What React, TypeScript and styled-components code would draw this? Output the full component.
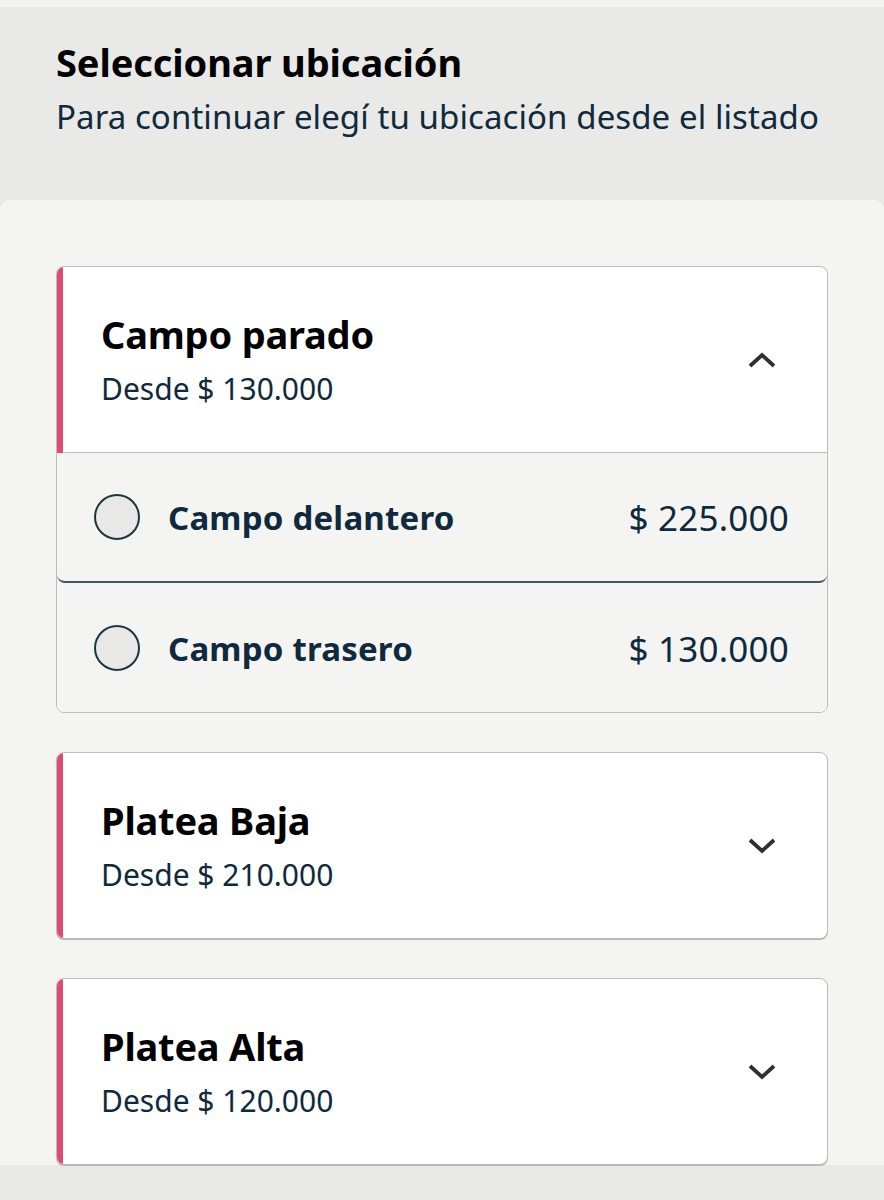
import React from "react";
import styled, { createGlobalStyle } from "styled-components";

const Global = createGlobalStyle`
  html, body { margin: 0; padding: 0; }
  body {
    background: #e9e9e7;
    font-family: "Noto Sans", "Open Sans", sans-serif;
    -webkit-font-smoothing: antialiased;
  }
  * { box-sizing: border-box; }
`;

const Page = styled.div`
  width: 884px;
  min-height: 1200px;
  display: flex;
  flex-direction: column;
  background: #e9e9e7;
`;

const TopStrip = styled.div`
  height: 7px;
  background: #f3f3f1;
`;

const Header = styled.header`
  height: 193px;
  padding: 33px 56px 0;
  display: flex;
  flex-direction: column;
  gap: 13px;
`;

const Title = styled.h1`
  margin: 0;
  font-size: 38px;
  line-height: 44px;
  font-weight: 700;
  color: #000;
  letter-spacing: -0.1px;
`;

const Subtitle = styled.p`
  margin: 0;
  font-size: 33px;
  line-height: 40px;
  font-weight: 400;
  color: #0f2a3c;
  letter-spacing: 0.08px;
`;

const Panel = styled.main`
  background: #f4f4f2;
  border-radius: 10px 10px 0 0;
  padding: 66px 56px 0;
  height: 965px;
  display: flex;
  flex-direction: column;
  gap: 39px;
`;

const Card = styled.section<{ $open?: boolean }>`
  position: relative;
  background: #fff;
  border: 1px solid #bdbdbd;
  border-radius: 8px;
  box-shadow: 0 ${(p) => (p.$open ? "0" : "1px")} 0 #b5b5b5;
  overflow: hidden;
`;

const Accent = styled.span<{ $open?: boolean }>`
  position: absolute;
  left: 0;
  top: 0;
  width: 6px;
  height: ${(p) => (p.$open ? "186px" : "100%")};
  background: #df4a70;
`;

const CardHeader = styled.div`
  height: 185px;
  padding: 0 50px 0 44px;
  display: flex;
  align-items: center;
  justify-content: space-between;
`;

const HeaderText = styled.div`
  display: flex;
  flex-direction: column;
  gap: 15px;
`;

const CardTitle = styled.h2`
  margin: 0;
  font-size: 38px;
  line-height: 44px;
  font-weight: 700;
  color: #000;
  letter-spacing: -0.2px;
`;

const CardPrice = styled.span`
  font-size: 30px;
  line-height: 36px;
  color: #0f2a3c;
`;

const Options = styled.div`
  border-top: 1px solid #bdbdbd;
  background: #f4f4f2;
`;

const Option = styled.label<{ $focused?: boolean }>`
  height: 130px;
  padding: 0 38px 0 37px;
  display: flex;
  align-items: center;
  gap: 28px;
  border-radius: ${(p) => (p.$focused ? "0 0 8px 8px" : "0")};
  border-bottom: ${(p) => (p.$focused ? "2px solid #3f5765" : "none")};
  cursor: pointer;
`;

const Radio = styled.span`
  width: 46px;
  height: 46px;
  flex: 0 0 46px;
  border-radius: 50%;
  background: #e8e8e7;
  border: 2px solid #1d3442;
`;

const OptionName = styled.span`
  flex: 1;
  font-size: 33px;
  font-weight: 700;
  color: #0f2a3c;
  letter-spacing: 0.2px;
`;

const OptionPrice = styled.span`
  font-size: 35px;
  color: #0f2a3c;
  letter-spacing: 0.2px;
`;

const Chevron = ({ up }: { up?: boolean }) => (
  <svg width="30" height="18" viewBox="0 0 30 18" fill="none">
    <path
      d={up ? "M3 15 L15 4 L27 15" : "M3 3 L15 14 L27 3"}
      stroke="#2f2f2f"
      strokeWidth="3.8"
    />
  </svg>
);

const sections = [
  {
    name: "Campo parado",
    from: "Desde $ 130.000",
    open: true,
    options: [
      { name: "Campo delantero", price: "$ 225.000" },
      { name: "Campo trasero", price: "$ 130.000" },
    ],
  },
  { name: "Platea Baja", from: "Desde $ 210.000", open: false, options: [] },
  { name: "Platea Alta", from: "Desde $ 120.000", open: false, options: [] },
];

export default function App() {
  return (
    <Page>
      <Global />
      <TopStrip />
      <Header>
        <Title>Seleccionar ubicación</Title>
        <Subtitle>Para continuar elegí tu ubicación desde el listado</Subtitle>
      </Header>
      <Panel>
        {sections.map((s) => (
          <Card key={s.name} $open={s.open}>
            <Accent $open={s.open} />
            <CardHeader>
              <HeaderText>
                <CardTitle>{s.name}</CardTitle>
                <CardPrice>{s.from}</CardPrice>
              </HeaderText>
              <Chevron up={s.open} />
            </CardHeader>
            {s.open && (
              <Options>
                {s.options.map((o, i) => (
                  <Option key={o.name} $focused={i === 0}>
                    <Radio />
                    <OptionName>{o.name}</OptionName>
                    <OptionPrice>{o.price}</OptionPrice>
                  </Option>
                ))}
              </Options>
            )}
          </Card>
        ))}
      </Panel>
    </Page>
  );
}
